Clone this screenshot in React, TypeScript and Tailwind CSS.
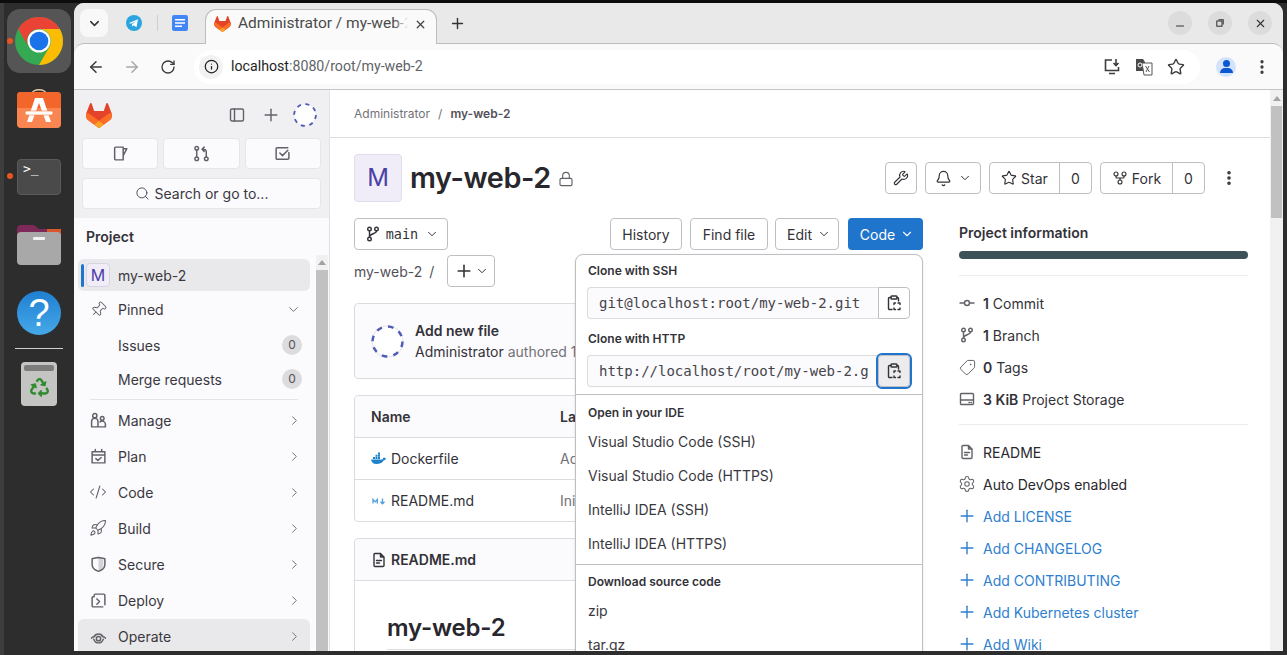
import React from "react";
import {
  ArrowLeft,
  ArrowRight,
  RotateCw,
  Info,
  Star,
  EllipsisVertical,
  ChevronDown,
  ChevronRight,
  Plus,
  Search,
  X,
  Minus,
  Lock,
  Wrench,
  Bell,
  GitFork,
  Tag,
  Settings,
  Pin,
  Rocket,
  CodeXml,
} from "lucide-react";
import { FaRecycle } from "react-icons/fa";

const GitLabLogo = ({ className }: { className: string }) => (
  <svg viewBox="0 0 25 24" className={className}>
    <path fill="#E24329" d="m24.507 9.5-.034-.09L21.082.562a.896.896 0 0 0-1.694.091l-2.29 7.01H7.825L5.535.653a.898.898 0 0 0-1.694-.09L.451 9.411.416 9.5a6.297 6.297 0 0 0 2.09 7.278l.012.01.03.022 5.16 3.867 2.56 1.935 1.554 1.176a1.051 1.051 0 0 0 1.268 0l1.555-1.176 2.56-1.935 5.197-3.89.014-.01A6.297 6.297 0 0 0 24.507 9.5Z" />
    <path fill="#FC6D26" d="m24.507 9.5-.034-.09a11.44 11.44 0 0 0-4.56 2.051l-7.447 5.632 4.742 3.584 5.197-3.89.014-.01A6.297 6.297 0 0 0 24.507 9.5Z" />
    <path fill="#FCA326" d="m7.707 20.677 2.56 1.935 1.555 1.176a1.051 1.051 0 0 0 1.268 0l1.555-1.176 2.56-1.935-4.743-3.584-4.755 3.584Z" />
    <path fill="#FC6D26" d="M5.01 11.461a11.43 11.43 0 0 0-4.56-2.05L.416 9.5a6.297 6.297 0 0 0 2.09 7.278l.012.01.03.022 5.16 3.867 4.745-3.584-7.444-5.632Z" />
  </svg>
);

const DashedAvatar = ({ className }: { className: string }) => (
  <svg viewBox="0 0 32 32" className={className}>
    <circle cx="16" cy="16" r="15" fill="#fff" stroke="#e4e4ea" strokeWidth="1" />
    <circle cx="16" cy="16" r="14.5" fill="none" stroke="#4f5bb5" strokeWidth="2.4" strokeDasharray="5.4 6" />
  </svg>
);

// 16px glyphs in the GitLab icon style
const G = ({ children, className = "w-4 h-4 text-[#626168]" }: { children: React.ReactNode; className?: string }) => (
  <svg viewBox="0 0 16 16" fill="none" stroke="currentColor" strokeWidth="1.4" strokeLinecap="round" strokeLinejoin="round" className={`shrink-0 ${className}`}>
    {children}
  </svg>
);

const BranchIcon = ({ className }: { className?: string }) => (
  <G className={className}>
    <circle cx="4.5" cy="3" r="1.8" />
    <circle cx="4.5" cy="13" r="1.8" />
    <circle cx="11.5" cy="3" r="1.8" />
    <path d="M4.5 5v6M11.5 5c0 3-7 2.5-7 6" />
  </G>
);
const MrIcon = () => (
  <G className="w-[17px] h-[17px] text-[#626168]">
    <circle cx="3.5" cy="3" r="1.7" />
    <circle cx="3.5" cy="13" r="1.7" />
    <circle cx="12.5" cy="13" r="1.7" />
    <path d="M3.5 5v6M12.5 11V6.5C12.5 4.5 11 4 9 4M10.5 2 8.5 4l2 2" />
  </G>
);
const IssueIcon = () => (
  <G className="w-[17px] h-[17px] text-[#626168]">
    <path d="M10.5 2v12H3.5a1 1 0 0 1-1-1V3a1 1 0 0 1 1-1zM10.5 3.5H14l-3.5 6.5" />
  </G>
);
const TodoIcon = () => (
  <G className="w-[17px] h-[17px] text-[#626168]">
    <path d="M14 7v5.5a1 1 0 0 1-1 1H3a1 1 0 0 1-1-1v-9a1 1 0 0 1 1-1h10" />
    <path d="m5.5 7.5 2.5 2.5 5-5" />
  </G>
);
const FileIcon = ({ className = "w-4 h-4 text-[#626168]" }: { className?: string }) => (
  <G className={className}>
    <path d="M9.5 1.5H4a1 1 0 0 0-1 1v11a1 1 0 0 0 1 1h8a1 1 0 0 0 1-1V5zM9.5 1.5V5H13M5.5 8.5h5M5.5 11h3" />
  </G>
);
const PasteIcon = () => (
  <G className="w-4 h-4 text-[#333238]">
    <path d="M6 14.5H3.5a1 1 0 0 1-1-1V3.500a1 1 0 0 1 1-1H5M11 2.5h.5a1 1 0 0 1 1 1V6" />
    <rect x="5" y="1" width="6" height="3" rx="0.8" />
    <path d="M8 9.500V8h1.500M12 8h2v1.500M14 13v1.500h-2M9.500 14.500H8V13" />
  </G>
);

const navItems: { label: string; icon: React.ReactNode }[] = [
  {
    label: "Manage",
    icon: (
      <G className="w-[17px] h-[17px] text-[#626168]">
        <circle cx="4.5" cy="3.5" r="2" />
        <path d="M1.5 14V9a3 3 0 0 1 6 0v5zM7.5 14h7v-2.5a3 3 0 0 0-5-2.2" />
        <circle cx="11.5" cy="6" r="1.7" />
      </G>
    ),
  },
  {
    label: "Plan",
    icon: (
      <G className="w-[17px] h-[17px] text-[#626168]">
        <path d="M2 3.5h12v10.5H2zM2 6.5h12M5 1.5v2M11 1.5v2M5.5 10l2 1.8L10.5 9" />
      </G>
    ),
  },
  { label: "Code", icon: <CodeXml size={18} strokeWidth={1.4} className="text-[#626168] shrink-0" /> },
  { label: "Build", icon: <Rocket size={18} strokeWidth={1.4} className="text-[#626168] shrink-0" /> },
  {
    label: "Secure",
    icon: (
      <G className="w-[17px] h-[17px] text-[#626168]">
        <path d="M2 2.5C4 2 6 1.8 8 1.5c2 .3 4 .5 6 1V8c0 3-3 5.500-6 6.500C5 13.500 2 11 2 8z" />
        <path d="M8 1.5v13c2.500-1 4.500-3.500 4.500-6V3.500z" fill="currentColor" stroke="none" opacity="0.25" />
      </G>
    ),
  },
  {
    label: "Deploy",
    icon: (
      <G className="w-[17px] h-[17px] text-[#626168]">
        <path d="M4 3.5V3a1 1 0 0 1 1-1h8a1 1 0 0 1 1 1v9M12 14H3a1 1 0 0 1-1-1V5.500a1 1 0 0 1 1-1h1M6.500 6.500 9 9l-2.500 2.500" />
      </G>
    ),
  },
];

const Dock = () => (
  <aside className="w-[74px] shrink-0 flex border-l-[4px] border-[#3d3d3d] bg-[#2d2d2d]">
    <div className="relative w-full flex flex-col items-center pt-[6px]">
      <span className="absolute left-[3px] top-[35px] w-[6px] h-[6px] rounded-full bg-[#e95420]" />
      <span className="absolute left-[3px] top-[170px] w-[6px] h-[6px] rounded-full bg-[#e95420]" />
      <div className="w-[64px] h-[64px] rounded-[13px] bg-[#555555] flex items-center justify-center">
        <svg viewBox="0 0 48 48" className="w-[48px] h-[48px]">
          <circle cx="24" cy="24" r="24" fill="#34a853" />
          <path fill="#ea4335" d="M3.2 12A24 24 0 0 1 44.78 12H24A12 12 0 0 0 13.6 30Z" />
          <path fill="#fbbc04" d="M44.78 12A24 24 0 0 1 24 48L34.39 30A12 12 0 0 0 24 12Z" />
          <circle cx="24" cy="24" r="11.5" fill="#fff" />
          <circle cx="24" cy="24" r="9.3" fill="#1a73e8" />
        </svg>
      </div>
      <svg viewBox="0 0 44 44" className="w-[44px] h-[44px] mt-[12px]">
        <path d="M14 10c1-7 15-7 16 0" fill="none" stroke="#e9c9a6" strokeWidth="1.6" />
        <rect x="0" y="7" width="44" height="36" rx="4" fill="#f98650" />
        <path d="M0 11a4 4 0 0 1 4-4h36a4 4 0 0 1 4 4v12H0z" fill="#f2652b" />
        <path d="M18 13h8l8 24h-5L22 18l-7 19h-5z" fill="#fff" />
        <rect x="8" y="26" width="28" height="4" rx="2" fill="#fff" stroke="#f7793f" strokeWidth="0.6" />
      </svg>
      <div className="w-[44px] h-[36px] mt-[30px] rounded-[4px] bg-[#4a4a4a] border border-[#5a5a5a] pl-[5px] pt-[2px] font-['DejaVu_Sans_Mono',monospace] text-[13px] leading-[14px] text-white">
        &gt;_
      </div>
      <svg viewBox="0 0 44 40" className="w-[44px] h-[40px] mt-[30px]">
        <path d="M0 4a4 4 0 0 1 4-4h13l5 4h22v14H0z" fill="#7d2a5a" />
        <path d="M30 4h14v10H30z" fill="#d9572b" />
        <rect x="0" y="7" width="44" height="33" rx="4" fill="#a8a8a8" />
        <rect x="16" y="12" width="12" height="3" rx="1" fill="#f2f2f2" />
      </svg>
      <div className="w-[44px] h-[44px] mt-[26px] rounded-full bg-linear-to-b from-[#1f7fd1] to-[#45a9e8] flex items-center justify-center font-['Liberation_Sans',sans-serif] text-[38px] leading-none text-white">
        ?
      </div>
      <div className="w-[48px] h-px bg-[#d0d0d0] mt-[13px]" />
      <div className="w-[36px] h-[44px] mt-[13px] rounded-[4px] bg-[#c4c4c2] flex flex-col items-center pt-[3px]">
        <div className="w-[30px] h-[6px] rounded-[2px] bg-[#7c7c7c]" />
        <FaRecycle size={19} className="text-[#2e8b2e] mt-[7px]" />
      </div>
    </div>
  </aside>
);

const TabStrip = () => (
  <div className="h-[40px] shrink-0 bg-[#e9e9e9] flex items-start pl-[6px] relative">
    <div className="mt-[6px] w-[28px] h-[28px] rounded-[8px] bg-[#f8f8f8] flex items-center justify-center">
      <ChevronDown size={15} strokeWidth={2.4} className="text-[#333]" />
    </div>
    <svg viewBox="0 0 16 16" className="w-[16px] h-[16px] ml-[18px] mt-[12px]">
      <circle cx="8" cy="8" r="8" fill="#2ba5e0" />
      <path d="m3 8 9-3.800-1.500 8-3-2-1.500 1.600V9.200l4-3.200-5 2.800z" fill="#fff" />
    </svg>
    <div className="w-px h-[16px] bg-[#cfcfcf] ml-[15px] mt-[12px]" />
    <svg viewBox="0 0 16 16" className="w-[16px] h-[16px] ml-[14px] mt-[12px]">
      <rect width="16" height="16" rx="2" fill="#4285f4" />
      <path d="M3 4h10v1.600H3zM3 7.200h10v1.600H3zM3 10.400h7V12H3z" fill="#fff" />
    </svg>
    <div className="ml-[17px] mt-[6px] w-[232px] h-[35px] rounded-t-[11px] bg-[#fafafa] border border-b-0 border-[#bdbdbd] flex items-center pl-[8px] pr-[9px] relative z-10 pb-[6px]">
      <GitLabLogo className="w-[17px] h-[16px] shrink-0" />
      <div className="ml-[7px] relative w-[170px] overflow-hidden font-['Roboto',sans-serif] text-[15.5px] text-[#4a4a4a] whitespace-nowrap">
        Administrator / my-web-2
        <span className="absolute right-0 top-0 bottom-0 w-[14px] bg-linear-to-r from-transparent to-[#fafafa]" />
      </div>
      <X size={13} strokeWidth={2.4} className="text-[#444] ml-auto" />
    </div>
    <Plus size={17} strokeWidth={2} className="ml-[12px] mt-[12px] text-[#333]" />
    <div className="ml-auto mt-[8px] mr-[11px] flex gap-[16px]">
      <div className="w-[24px] h-[24px] rounded-full bg-[#dcdcdc] flex items-center justify-center">
        <Minus size={12} strokeWidth={2} className="text-[#333] mt-[6px]" />
      </div>
      <div className="w-[24px] h-[24px] rounded-full bg-[#dcdcdc] flex items-center justify-center">
        <svg viewBox="0 0 10 10" className="w-[8px] h-[8px]" fill="none" stroke="#333" strokeWidth="1.3">
          <rect x="1" y="2.5" width="6.5" height="6.5" />
          <path d="M3 1h6v6" />
        </svg>
      </div>
      <div className="w-[24px] h-[24px] rounded-full bg-[#dcdcdc] flex items-center justify-center">
        <X size={13} strokeWidth={2} className="text-[#333]" />
      </div>
    </div>
  </div>
);

const Toolbar = () => (
  <div className="h-[47px] shrink-0 bg-[#fafafa] border-b border-[#c6c6c6] rounded-tl-[10px] border-t border-t-[#bdbdbd] rounded-tr-[10px] flex items-center pl-[13px]">
    <ArrowLeft size={18} strokeWidth={2} className="text-[#3c3c3c]" />
    <ArrowRight size={18} strokeWidth={2} className="text-[#a8a8a8] ml-[18px]" />
    <RotateCw size={16} strokeWidth={2} className="text-[#3c3c3c] ml-[19px]" />
    <div className="ml-[18px] w-[1006px] h-[34px] rounded-full bg-white flex items-center pl-[5px] relative">
      <div className="w-[24px] h-[24px] rounded-full bg-[#f2f2f2] flex items-center justify-center">
        <Info size={15} strokeWidth={2} className="text-[#222]" />
      </div>
      <span className="ml-[8px] font-['Roboto',sans-serif] text-[14.2px] text-[#1f1f1f]">
        localhost<span className="text-[#606368]">:8080/root/my-web-2</span>
      </span>
      <div className="ml-auto mr-[15px] flex items-center gap-[14px] text-[#3c3c3c]">
        <svg viewBox="0 0 18 18" className="w-[18px] h-[18px]" fill="none" stroke="currentColor" strokeWidth="1.6">
          <path d="M9 2H2.5v10.500h13V9M6 15.500h6M13 1v6M10.500 5l2.500 2.500L15.500 5" />
        </svg>
        <svg viewBox="0 0 18 18" className="w-[18px] h-[18px]">
          <path d="M1 1h7l2 3v9H1z" fill="#4a4a4a" />
          <path d="M7 5h10v12H9z" fill="#fff" stroke="#555" />
          <circle cx="5" cy="7" r="2" fill="none" stroke="#fff" strokeWidth="1" />
          <path d="m10.500 8 4 6M14 8l-3 6" stroke="#555" strokeWidth="1" />
        </svg>
        <Star size={18} strokeWidth={1.9} />
      </div>
    </div>
    <div className="ml-[16px] w-[20px] h-[20px] rounded-full bg-[#d3e3fd] flex flex-col items-center justify-center">
      <div className="w-[7px] h-[7px] rounded-full bg-[#0b57d0]" />
      <div className="w-[13px] h-[5px] rounded-t-full bg-[#0b57d0] mt-[1px]" />
    </div>
    <EllipsisVertical size={18} strokeWidth={2.4} className="text-[#3c3c3c] ml-[17px]" />
  </div>
);

const NavRow = ({ icon, label, active }: { icon: React.ReactNode; label: string; active?: boolean }) => (
  <div className={`h-[36px] flex items-center pl-[10px] pr-[8px] rounded-[6px] text-[14px] text-[#3a383f] ${active ? "bg-[#e9e9eb] mt-[1px] pb-[2px]" : ""}`}>
    <div className="w-[20px] flex justify-center">{icon}</div>
    <span className="ml-[10px]">{label}</span>
    <ChevronRight size={15} strokeWidth={1.6} className="ml-auto text-[#737278]" />
  </div>
);

const SubRow = ({ label, count }: { label: string; count: number }) => (
  <div className="h-[34px] flex items-center pl-[40px] pr-[8px] text-[14px] text-[#3a383f]">
    <span>{label}</span>
    <span className="ml-auto w-[20px] h-[20px] rounded-full bg-[#dcdcde] flex items-center justify-center text-[12px] text-[#535158]">{count}</span>
  </div>
);

const SideButton = ({ children }: { children: React.ReactNode }) => (
  <div className="h-[31px] flex-1 rounded-[4px] bg-[#fbfafd] border border-[#e6e6e9] flex items-center justify-center">{children}</div>
);

const Sidebar = () => (
  <aside className="w-[256px] shrink-0 flex flex-col bg-[#fbfafd] border-r border-[#e2e2e5]">
    <div className="h-[128px] shrink-0 bg-[#f0f0f3] px-[8px]">
      <div className="h-[48px] flex items-center pl-[4px] pt-[2px]">
        <GitLabLogo className="w-[26px] h-[25px]" />
        <G className="w-4 h-4 text-[#626168] ml-auto">
          <rect x="1.5" y="2" width="13" height="12" rx="1.5" />
          <path d="M5.5 2v12" />
        </G>
        <Plus size={20} strokeWidth={1.7} className="ml-[16px] text-[#626168]" />
        <DashedAvatar className="w-[24px] h-[24px] ml-[12px] mr-[4px]" />
      </div>
      <div className="flex gap-[5px]">
        <SideButton><IssueIcon /></SideButton>
        <SideButton><MrIcon /></SideButton>
        <SideButton><TodoIcon /></SideButton>
      </div>
      <div className="mt-[9px] h-[31px] rounded-[4px] bg-[#fbfafd] border border-[#e6e6e9] flex items-center justify-center text-[14px] text-[#3a383f] gap-[5px]">
        <Search size={15} strokeWidth={1.6} className="text-[#535158]" />
        Search or go to...
      </div>
    </div>
    <div className="h-[37px] shrink-0 flex items-center pl-[12px] text-[14px] font-semibold text-[#333238]">Project</div>
    <div className="flex-1 min-h-0 flex overflow-hidden pl-[4px] pr-[1px]">
      <div className="w-[232px] pt-[4px]">
        <div className="h-[32px] rounded-[6px] bg-[#e9e9eb] flex items-center relative pl-[8px] text-[14px] text-[#3a383f]">
          <span className="absolute left-[3px] top-[5px] w-[3px] h-[23px] rounded bg-[#1f75cb]" />
          <div className="w-[24px] h-[24px] rounded-[4px] bg-[#f0edf9] border border-[#d8d5e3] flex items-center justify-center text-[#4b3fa6] text-[16px]">M</div>
          <span className="ml-[8px]">my-web-2</span>
        </div>
        <div className="h-[36px] mb-[1px] flex items-center pl-[10px] pr-[9px] text-[14px] text-[#3a383f]">
          <div className="w-[20px] flex justify-center"><Pin size={17} strokeWidth={1.4} className="rotate-45 text-[#626168]" /></div>
          <span className="ml-[10px]">Pinned</span>
          <ChevronDown size={15} strokeWidth={1.6} className="ml-auto text-[#737278]" />
        </div>
        <SubRow label="Issues" count={0} />
        <SubRow label="Merge requests" count={0} />
        <div className="h-px bg-[#e4e4e6] mx-[12px] mt-[3px] mb-[2px]" />
        {navItems.map((n) => (
          <NavRow key={n.label} label={n.label} icon={n.icon} />
        ))}
        <NavRow
          label="Operate"
          active
          icon={
            <G className="w-[17px] h-[17px] text-[#626168]">
              <path d="M3.5 8.5A5 5 0 0 1 12.5 8.5M1.5 9.5c1-1.200 2-1.500 3-1.500M14.500 9.500c-1-1.200-2-1.500-3-1.500M3.500 10.500c1 2.500 3 3.500 4.500 3.500s3.500-1 4.500-3.500" />
              <circle cx="8" cy="10" r="2" />
            </G>
          }
        />
      </div>
      <div className="ml-[6px] w-[12px] bg-[#f1f1f1] flex flex-col items-center">
        <div className="h-[15px] flex items-center">
          <div className="w-0 h-0 border-l-[4px] border-r-[4px] border-b-[5px] border-l-transparent border-r-transparent border-b-[#a3a3a3]" />
        </div>
        <div className="flex-1 w-full bg-[#c1c1c1]" />
      </div>
    </div>
  </aside>
);

const Btn = ({ children, className = "" }: { children: React.ReactNode; className?: string }) => (
  <div className={`h-[32px] rounded-[4px] border border-[#bfbfc3] bg-white flex items-center justify-center text-[14px] text-[#333238] ${className}`}>
    {children}
  </div>
);

const CounterBtn = ({ icon, label, count, left, className }: { icon: React.ReactNode; label: string; count: number; left: string; className: string }) => (
  <div className={`h-[32px] rounded-[4px] border border-[#bfbfc3] flex items-center text-[14px] text-[#333238] ${className}`}>
    <div className={`h-full flex items-center justify-center gap-[4px] border-r border-[#bfbfc3] ${left}`}>
      {icon}
      {label}
    </div>
    <span className="flex-1 text-center">{count}</span>
  </div>
);

const CloneField = ({ value, focused }: { value: string; focused?: boolean }) => (
  <div className="h-[32px] flex">
    <div className="flex-1 min-w-0 rounded-l-[4px] bg-[#fbfafd] border border-r-0 border-[#dcdcde] pl-[11px] flex items-center font-['DejaVu_Sans_Mono',monospace] text-[14px] text-[#45444a]">
      <div className="w-[270px] overflow-hidden whitespace-nowrap">{value}</div>
    </div>
    <div className={`w-[32px] shrink-0 flex items-center justify-center rounded-r-[4px] border border-[#bfbfc3] ${focused ? "bg-[#ececef] outline-2 outline-[#1f75cb] outline-offset-0 rounded-[4px]" : "bg-white"}`}>
      <PasteIcon />
    </div>
  </div>
);

const PopHeading = ({ children, className = "" }: { children: React.ReactNode; className?: string }) => (
  <div className={`text-[12px] leading-[16px] font-semibold text-[#333238] ${className}`}>{children}</div>
);

const PopItem = ({ children }: { children: React.ReactNode }) => (
  <div className="h-[34px] flex items-center text-[14px] text-[#3a383f]">{children}</div>
);

const CodePopover = () => (
  <div className="absolute left-[221px] top-[36px] w-[348px] h-[420px] z-20 rounded-[8px] border border-[#bfbfc3] bg-white shadow-sm">
    <div className="pl-[11px] pr-[12px] pt-[8px] h-[140px] border-b border-[#bfbfc3]">
      <PopHeading className="ml-[1px]">Clone with SSH</PopHeading>
      <div className="mt-[8px]"><CloneField value="git@localhost:root/my-web-2.git" /></div>
      <PopHeading className="mt-[12px] ml-[1px]">Clone with HTTP</PopHeading>
      <div className="mt-[8px]"><CloneField value="http://localhost/root/my-web-2.git" focused /></div>
    </div>
    <div className="px-[12px] pt-[10px] h-[170px] border-b border-[#bfbfc3]">
      <PopHeading>Open in your IDE</PopHeading>
      <div className="mt-[3px]">
        <PopItem>Visual Studio Code (SSH)</PopItem>
        <PopItem>Visual Studio Code (HTTPS)</PopItem>
        <PopItem>IntelliJ IDEA (SSH)</PopItem>
        <PopItem>IntelliJ IDEA (HTTPS)</PopItem>
      </div>
    </div>
    <div className="px-[12px] pt-[9px]">
      <PopHeading>Download source code</PopHeading>
      <div className="mt-[3px]">
        <PopItem>zip</PopItem>
        <PopItem>tar.gz</PopItem>
      </div>
    </div>
  </div>
);

const InfoRow = ({ icon, children, className = "text-[#333238]" }: { icon: React.ReactNode; children: React.ReactNode; className?: string }) => (
  <div className={`h-[32px] flex items-center text-[14px] whitespace-nowrap ${className}`}>
    <div className="w-[16px] flex justify-center shrink-0">{icon}</div>
    <span className="ml-[8px]">{children}</span>
  </div>
);

const addLinks = ["Add LICENSE", "Add CHANGELOG", "Add CONTRIBUTING", "Add Kubernetes cluster", "Add Wiki"];

const MainContent = () => (
  <main className="flex-1 min-w-0 bg-white overflow-hidden">
    <div className="h-[48px] border-b border-[#dcdcde] pl-[24px] flex items-center text-[12px] text-[#737278]">
      Administrator
      <span className="mx-[8px]">/</span>
      <span className="font-semibold text-[#535158]">my-web-2</span>
    </div>
    <div className="px-[24px]">
      <div className="mt-[16px] h-[48px] flex items-center">
        <div className="w-[48px] h-[48px] rounded-[4px] bg-[#f0edf9] border border-[#e0dded] flex items-center justify-center text-[24px] text-[#4b3fa6]">M</div>
        <h1 className="ml-[8px] text-[28.8px] font-semibold text-[#28272d] tracking-[-0.4px]">my-web-2</h1>
        <Lock size={16} strokeWidth={1.7} className="ml-[7px] mt-[2px] text-[#626168]" />
        <div className="ml-auto flex items-center">
          <Btn className="w-[32px]"><Wrench size={16} strokeWidth={1.7} /></Btn>
          <Btn className="w-[56px] ml-[8px] gap-[6px]"><Bell size={17} strokeWidth={1.7} /><ChevronDown size={14} strokeWidth={1.7} /></Btn>
          <CounterBtn className="w-[103px] ml-[8px]" left="w-[70px]" label="Star" count={0} icon={<Star size={16} strokeWidth={1.7} />} />
          <CounterBtn className="w-[105px] ml-[8px]" left="w-[72px]" label="Fork" count={0} icon={<GitFork size={16} strokeWidth={1.7} />} />
          <EllipsisVertical size={18} strokeWidth={2.8} className="ml-[15px] mr-[8px] text-[#333238]" />
        </div>
      </div>
      <div className="mt-[16px] flex">
        <div className="w-[569px] shrink-0 relative">
          <div className="flex items-center">
            <Btn className="w-[94px] gap-[5px] pl-[2px]">
              <BranchIcon className="w-4 h-4 text-[#333238]" />
              <span className="font-['DejaVu_Sans_Mono',monospace] text-[13.5px]">main</span>
              <ChevronDown size={14} strokeWidth={1.7} className="ml-[2px]" />
            </Btn>
            <Btn className="w-[72px] ml-auto">History</Btn>
            <Btn className="w-[78px] ml-[8px]">Find file</Btn>
            <Btn className="w-[64px] ml-[7px] gap-[5px] pl-[4px]">Edit<ChevronDown size={14} strokeWidth={1.7} /></Btn>
            <div className="w-[75px] ml-[9px] h-[32px] rounded-[4px] bg-[#1f75cb] text-white text-[14px] flex items-center justify-center gap-[5px] pl-[3px]">
              Code<ChevronDown size={14} strokeWidth={1.9} />
            </div>
          </div>
          <div className="mt-[5px] flex items-center text-[14px] text-[#535158]">
            my-web-2
            <span className="ml-[7px]">/</span>
            <Btn className="w-[48px] ml-[13px] gap-[1px]"><Plus size={20} strokeWidth={1.9} /><ChevronDown size={14} strokeWidth={1.7} /></Btn>
          </div>
          <CodePopover />
          <div className="mt-[16px] h-[76px] rounded-[4px] border border-[#dcdcde] bg-[#fbfafd] flex items-center pl-[16px] text-[14px]">
            <DashedAvatar className="w-[33px] h-[33px]" />
            <div className="ml-[11px] leading-[21px]">
              <div className="font-semibold text-[#333238]">Add new file</div>
              <div className="text-[#737278]"><span className="text-[#333238]">Administrator</span> authored 1 week ago</div>
            </div>
          </div>
          <div className="mt-[16px] h-[127px] rounded-[4px] border border-[#dcdcde] text-[14px] text-[#333238] flex flex-col">
            <div className="h-[42px] border-b border-[#dcdcde] bg-[#fbfafd] rounded-t-[4px] grid grid-cols-[189px_1fr] items-center pl-[16px] font-semibold">
              <span>Name</span>
              <span>Last commit</span>
            </div>
            <div className="h-[42px] border-b border-[#dcdcde] grid grid-cols-[189px_1fr] items-center pl-[16px]">
              <span className="flex items-center gap-[4px]">
                <svg viewBox="0 0 16 16" className="w-[16px] h-[16px]">
                  <path fill="#1d84c9" d="M0 8.500h11.500c.5-1.500 1-2 2-2 .4.600.8 1 1.800 1-.6 1.300-1.500 1.700-2.500 1.800C11.500 12 9 13 5.500 13 2 13 .5 11 0 8.500z" />
                  <path fill="#1d84c9" d="M2 6h2v2H2zM4.500 6h2v2h-2zM7 6h2v2H7zM4.500 3.700h2v2h-2zM7 3.700h2v2H7zM7 1.500h2v2H7z" />
                </svg>
                Dockerfile
              </span>
              <span className="text-[#737278]">Add new file</span>
            </div>
            <div className="h-[41px] grid grid-cols-[189px_1fr] items-center pl-[16px]">
              <span className="flex items-center gap-[4px]">
                <svg viewBox="0 0 16 16" className="w-[16px] h-[16px]" fill="none" stroke="#4f9ede" strokeWidth="1.3">
                  <path d="M2 10.500v-4l2.200 2.400L6.300 6.500v4M11.500 5.500v5M9.500 8.800l2 2 2-2" />
                </svg>
                README.md
              </span>
              <span className="text-[#737278]">Initial commit</span>
            </div>
          </div>
          <div className="mt-[16px] h-[200px] rounded-[4px] border border-[#dcdcde]">
            <div className="h-[42px] border-b border-[#dcdcde] bg-[#fbfafd] rounded-t-[4px] flex items-center pl-[16px] gap-[4px] text-[14px] font-semibold text-[#333238]">
              <FileIcon className="w-4 h-4 text-[#333238]" />
              README.md
            </div>
            <div className="pl-[32px] pr-[32px] pt-[29px]">
              <div className="h-[40px] border-b border-[#dcdcde] text-[24px] leading-[36px] font-semibold text-[#28272d] tracking-[-0.2px]">my-web-2</div>
            </div>
          </div>
        </div>
        <div className="ml-[36px] w-[289px] shrink-0 text-[14px]">
          <div className="mt-[5px] h-[20px] font-semibold text-[#333238] leading-[20px]">Project information</div>
          <div className="mt-[8px] h-[8px] rounded-full bg-[#3d5159]" />
          <div className="mt-[16px] border-t border-[#ececef] pt-[11px] pb-[9px]">
            <InfoRow icon={<G className="w-4 h-4 text-[#626168]"><circle cx="8" cy="8" r="2.5" /><path d="M1 8h4.500M10.500 8H15" /></G>}><b className="font-semibold">1</b> Commit</InfoRow>
            <InfoRow icon={<BranchIcon className="w-4 h-4 text-[#626168]" />}><b className="font-semibold">1</b> Branch</InfoRow>
            <InfoRow icon={<Tag size={17} strokeWidth={1.4} className="text-[#626168] rotate-90 shrink-0" />}><b className="font-semibold">0</b> Tags</InfoRow>
            <InfoRow icon={<G className="w-4 h-4 text-[#626168]"><rect x="1.5" y="2.5" width="13" height="11" rx="1" /><path d="M1.500 9h13M10 11.500h.5M12 11.500h.5" /></G>}><b className="font-semibold">3 KiB</b> Project Storage</InfoRow>
          </div>
          <div className="border-t border-[#ececef] pt-[11px]">
            <InfoRow className="text-[#28272d]" icon={<FileIcon />}>README</InfoRow>
            <InfoRow className="text-[#28272d]" icon={<Settings size={18} strokeWidth={1.4} className="text-[#626168] shrink-0" />}>Auto DevOps enabled</InfoRow>
            {addLinks.map((l) => (
              <InfoRow key={l} className="text-[#2f7fd0]" icon={<Plus size={20} strokeWidth={1.7} className="shrink-0" />}>{l}</InfoRow>
            ))}
          </div>
        </div>
      </div>
    </div>
  </main>
);

const App = () => (
  <div className="w-[1287px] h-[655px] flex flex-col overflow-hidden bg-[#2d2d2d] font-['Inter',sans-serif]">
    <div className="h-[3px] shrink-0 bg-[#0c0c0c]" />
    <div className="flex-1 min-h-0 flex">
      <Dock />
      <div className="flex-1 min-w-0 mb-[4px] mr-[4px] flex flex-col bg-[#e9e9e9] rounded-t-[10px] overflow-hidden">
        <TabStrip />
        <Toolbar />
        <div className="flex-1 min-h-0 flex">
          <Sidebar />
          <MainContent />
          <div className="w-[13px] shrink-0 bg-[#f1f1f1] flex flex-col items-center">
            <div className="h-[16px] flex items-center">
              <div className="w-0 h-0 border-l-[4px] border-r-[4px] border-b-[5px] border-l-transparent border-r-transparent border-b-[#a3a3a3]" />
            </div>
            <div className="w-[11px] h-[112px] bg-[#c1c1c1]" />
          </div>
        </div>
      </div>
    </div>
  </div>
);

export default App;
